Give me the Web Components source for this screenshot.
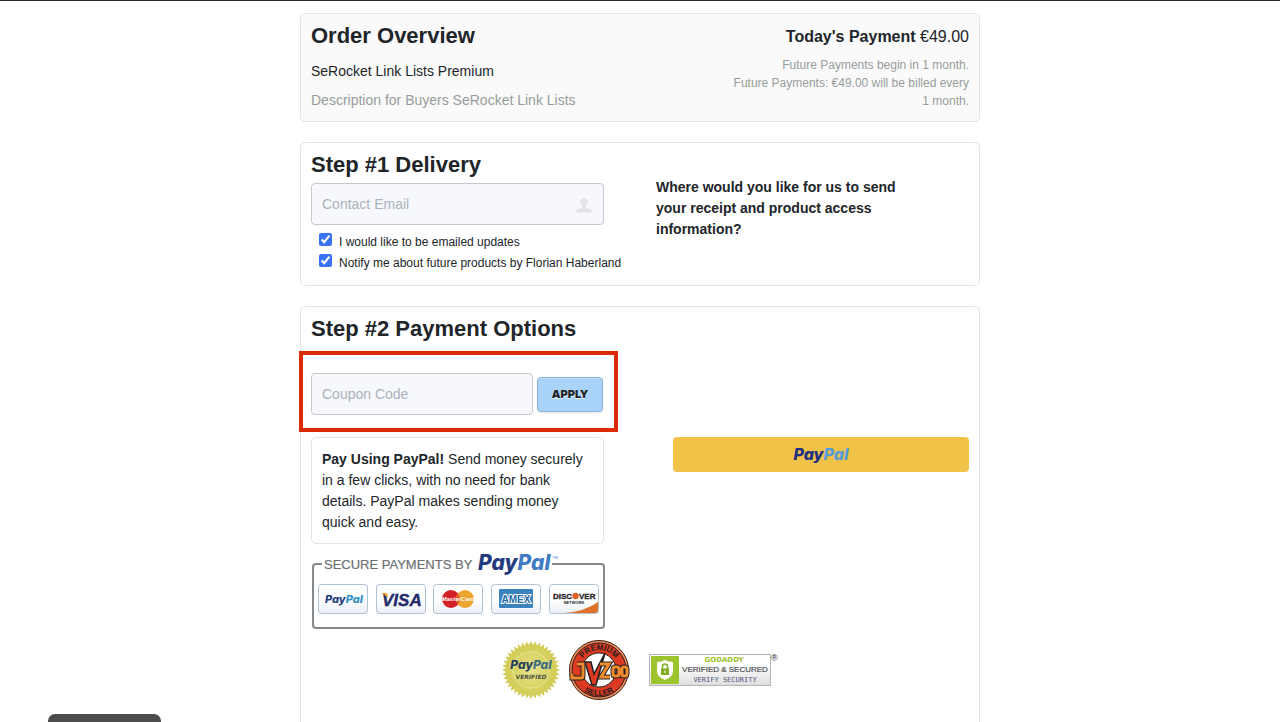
<!DOCTYPE html>
<html lang="en">
<head>
<meta charset="utf-8">
<title>Order Overview</title>
<style>
   html, body {
      height: 100%;
   }
   body {
      margin: 0;
      background: white;
      color: #212529;
      font: 14px/21px "Liberation Sans", Arial, sans-serif;
   }
</style>
</head>
<body>
<checkout-page></checkout-page>

<script>
function makeTemplate(html){
   const template = document.createElement("template")
   template.innerHTML = html
   return template
}

class BaseElement extends HTMLElement {
   constructor(){
      super()
      this.attachShadow({ mode: "open" })
      this.shadowRoot.appendChild(this.constructor.template.content.cloneNode(true))
   }
}

// bordered box, "open" leaves out the bottom edge
class PagePanel extends BaseElement {
   static template = makeTemplate(`
      <style>
         :host {
            display: block;
            box-sizing: border-box;
            padding: 10px;
            border: 1px solid #e3e5e5;
            border-radius: 5px;
            background: white;
         }
         :host([shaded]) {
            background: #fafafa;
         }
         :host([open]) {
            border-bottom: 0;
            border-radius: 5px 5px 0 0;
         }
      </style>
      <slot></slot>
   `)
}
customElements.define("page-panel", PagePanel)

class OrderOverview extends BaseElement {
   static template = makeTemplate(`
      <style>
         :host {
            display: block;
         }
         .row {
            display: flex;
            justify-content: space-between;
         }
         h2 {
            margin: 0 0 13px;
            font-size: 22px;
            line-height: 24px;
         }
         p {
            margin: 0;
         }
         .description {
            margin-top: 8px;
            color: #979d9b;
         }
         .price {
            width: 240px;
            text-align: right;
         }
         .today {
            margin-bottom: 6px;
            font-size: 16px;
            line-height: 26px;
         }
         .future {
            color: #979d9b;
            font-size: 12px;
            line-height: 18px;
         }
      </style>
      <page-panel shaded>
         <div class="row">
            <div>
               <h2>Order Overview</h2>
               <p>SeRocket Link Lists Premium</p>
               <p class="description">Description for Buyers SeRocket Link Lists</p>
            </div>
            <div class="price">
               <p class="today"><b>Today's Payment</b> €49.00</p>
               <p class="future">Future Payments begin in 1 month.</p>
               <p class="future">Future Payments: €49.00 will be billed every 1 month.</p>
            </div>
         </div>
      </page-panel>
   `)
}
customElements.define("order-overview", OrderOverview)

class TextField extends BaseElement {
   static template = makeTemplate(`
      <style>
         :host {
            display: block;
            position: relative;
         }
         input {
            display: block;
            box-sizing: border-box;
            width: 100%;
            height: 42px;
            padding: 0 10px;
            border: 1px solid #c5c9cb;
            border-radius: 4px;
            background: #f6f8fd;
            color: inherit;
            font: inherit;
         }
         input::placeholder {
            color: #acb2b9;
            opacity: 1;
         }
         ::slotted(svg) {
            position: absolute;
            right: 12px;
            top: 14px;
         }
      </style>
      <input>
      <slot></slot>
   `)

   connectedCallback(){
      const input = this.shadowRoot.querySelector("input")
      input.type = this.getAttribute("type") || "text"
      input.placeholder = this.getAttribute("label")
      input.setAttribute("aria-label", this.getAttribute("label"))
   }
}
customElements.define("text-field", TextField)

class CheckOption extends BaseElement {
   static template = makeTemplate(`
      <style>
         :host {
            display: block;
            padding-left: 8px;
            font-size: 12px;
            white-space: nowrap;
         }
         label {
            display: flex;
            align-items: flex-end;
            gap: 7px;
            height: 21px;
         }
         input {
            width: 13px;
            height: 13px;
            margin: 0 0 7px;
            accent-color: #3b73f6;
         }
      </style>
      <label><input type="checkbox" checked><slot></slot></label>
   `)
}
customElements.define("check-option", CheckOption)

class DeliveryStep extends BaseElement {
   static template = makeTemplate(`
      <style>
         :host {
            display: block;
         }
         .columns {
            display: grid;
            grid-template-columns: 293px 1fr;
            gap: 52px;
            padding-bottom: 1px;
         }
         h2 {
            margin: 0 0 6px;
            font-size: 22px;
            line-height: 24px;
         }
         text-field {
            margin-bottom: 7px;
         }
         .question {
            max-width: 260px;
            margin: 24px 0 0;
            font-weight: bold;
         }
      </style>
      <page-panel>
         <div class="columns">
            <div>
               <h2>Step #1 Delivery</h2>
               <text-field type="email" label="Contact Email">
                  <svg width="16" height="16" viewBox="0 0 16 16" fill="#e1e3e4">
                     <path d="M8 1c2.300 0 3.700 1.600 3.700 3.900 0 1.700-.8 3.300-2 4.200v1.300c1 .7 4.200 1 5.400 2 .7.600.9 1.500.9 3.100H0c0-1.600.2-2.500.9-3.100 1.200-1 4.400-1.300 5.400-2V9.100c-1.200-.9-2-2.500-2-4.200C4.300 2.600 5.700 1 8 1z"/>
                  </svg>
               </text-field>
               <check-option>I would like to be emailed updates</check-option>
               <check-option>Notify me about future products by Florian Haberland</check-option>
            </div>
            <p class="question">Where would you like for us to send your receipt and product access information?</p>
         </div>
      </page-panel>
   `)
}
customElements.define("delivery-step", DeliveryStep)

class CouponForm extends BaseElement {
   static template = makeTemplate(`
      <style>
         :host {
            display: block;
            position: relative;
            width: 292px;
         }
         form {
            display: flex;
            align-items: center;
            gap: 4px;
         }
         text-field {
            flex: 1;
         }
         button {
            width: 66px;
            height: 35px;
            padding: 0;
            border: 1px solid #8cb4da;
            border-radius: 4px;
            background: #a9d3f8;
            box-shadow: inset 0 1px 0 #bcdffb, 0 1px 2px rgba(0,0,0,0.1);
            color: #212529;
            font: 900 11px Inter, sans-serif;
            text-shadow: 0 1px 1px rgba(255,255,255,0.8);
         }
         .highlight {
            position: absolute;
            inset: -22px -15px -17px -12px;
            border: 4px solid #dc2a04;
            pointer-events: none;
         }
      </style>
      <form>
         <text-field label="Coupon Code"></text-field>
         <button type="button">APPLY</button>
      </form>
      <div class="highlight"></div>
   `)
}
customElements.define("coupon-form", CouponForm)

class PaypalButton extends BaseElement {
   static template = makeTemplate(`
      <style>
         :host {
            display: block;
         }
         button {
            display: block;
            width: 100%;
            height: 35px;
            padding: 0;
            border: 0;
            border-radius: 4px;
            background: #f0c248;
            color: #213080;
            font: italic 800 16px/35px Inter, sans-serif;
         }
         span {
            color: #569bdc;
         }
      </style>
      <button type="button">Pay<span>Pal</span></button>
   `)
}
customElements.define("paypal-button", PaypalButton)

class SecurePayments extends BaseElement {
   static template = makeTemplate(`
      <style>
         :host {
            display: block;
         }
         svg {
            display: block;
         }
         .brand {
            font-family: Inter, sans-serif;
            font-style: italic;
            font-weight: 800;
         }
      </style>
      <svg width="296" height="86" viewBox="0 -6 296 86" role="img" aria-label="Secure payments by PayPal">
         <defs>
            <linearGradient id="card" x1="0" y1="0" x2="0" y2="1">
               <stop offset="0" stop-color="#ffffff"/>
               <stop offset="0.6" stop-color="#fdfdfe"/>
               <stop offset="1" stop-color="#e9eef4"/>
            </linearGradient>
         </defs>
         <path d="M11 12H5q-3 0-3 3v58q0 3 3 3h285q3 0 3-3V15q0-3-3-3h-49" fill="none" stroke="#87888b" stroke-width="2"/>
         <text x="13" y="17" font-size="13" fill="#6d6f73" stroke="#6d6f73" stroke-width="0.2" font-family="Liberation Sans">SECURE PAYMENTS BY</text>
         <text class="brand" x="167" y="18" font-size="21" fill="#253b80">Pay<tspan fill="#3f7cc4">Pal</tspan></text>
         <text x="241" y="7" font-size="4" fill="#3f7cc4">TM</text>
         <g fill="url(#card)" stroke="#afc1d2">
            <rect x="7.5" y="32.5" width="49" height="29" rx="3"/>
            <rect x="65.5" y="32.5" width="49" height="29" rx="3"/>
            <rect x="122.5" y="32.5" width="49" height="29" rx="3"/>
            <rect x="180.5" y="32.5" width="49" height="29" rx="3"/>
            <rect x="238.5" y="32.5" width="49" height="29" rx="3"/>
         </g>

         <text class="brand" x="14" y="51" font-size="11" fill="#22407c">Pay<tspan fill="#3191c4">Pal</tspan></text>

         <text x="71" y="54" font-size="17" font-weight="bold" font-style="italic" font-family="Liberation Sans" fill="#232c6b" stroke="#232c6b" stroke-width="0.4">VISA</text>
         <path d="M70 41h6l1 5q-2-3-7-5z" fill="#eca52c"/>

         <circle cx="140" cy="47" r="9" fill="#d32027"/>
         <circle cx="154" cy="47" r="9" fill="#eda52f"/>
         <path d="M147 41.300a9 9 0 0 1 0 11.400a9 9 0 0 1 0-11.400z" fill="#e2622c"/>
         <text x="147" y="49" font-size="6" font-weight="bold" font-style="italic" text-anchor="middle" fill="white" font-family="Liberation Sans">MasterCard</text>

         <rect x="188" y="37" width="34" height="19" rx="1" fill="#3b83bd"/>
         <text x="205" y="51" font-size="10" font-weight="bold" text-anchor="middle" font-family="Liberation Sans" fill="#236ba9" stroke="white" stroke-width="2" paint-order="stroke">AMEX</text>

         <path d="M287 50v8q0 3-3 3h-31q20-1 34-11z" fill="#df712c"/>
         <g font-family="Liberation Sans" font-weight="bold" fill="#252525">
            <text x="242" y="47" font-size="8" stroke="#252525" stroke-width="0.3">DISC</text>
            <text x="268" y="47" font-size="8" stroke="#252525" stroke-width="0.3">VER</text>
            <text x="263" y="52" font-size="4" text-anchor="middle">NETWORK</text>
         </g>
         <circle cx="264.5" cy="44" r="3.2" fill="#e26023"/>
      </svg>
   `)
}
customElements.define("secure-payments", SecurePayments)

class TrustBadges extends BaseElement {
   static template = makeTemplate(`
      <style>
         :host {
            display: flex;
            justify-content: center;
            align-items: center;
         }
         a {
            color: inherit;
            text-decoration: none;
         }
         svg {
            display: block;
         }
         .jvzoo {
            margin: 0 19px 0 9px;
         }
      </style>
      <a href="#" aria-label="PayPal Verified">
         <svg width="58" height="60" viewBox="-29 -30 58 60">
            <defs>
               <radialGradient id="seal">
                  <stop offset="0" stop-color="#e9e48f"/>
                  <stop offset="0.55" stop-color="#dcd76c"/>
                  <stop offset="1" stop-color="#d2cc57"/>
               </radialGradient>
            </defs>
            <polygon class="teeth" fill="#d3cc58"/>
            <circle r="25" fill="url(#seal)"/>
            <circle r="18" fill="none" stroke="#e9e593"/>
            <text x="0" y="-1" text-anchor="middle" font-family="Inter" font-size="12" font-weight="800" font-style="italic" fill="#26405f">Pay<tspan fill="#3b6c86">Pal</tspan></text>
            <text x="0" y="9" text-anchor="middle" font-family="DejaVu Sans" font-size="6" font-weight="bold" font-style="italic" fill="#4a5444">VERIFIED</text>
         </svg>
      </a>
      <a class="jvzoo" href="#" aria-label="JVZoo Premium Seller">
         <svg width="61" height="60" viewBox="-30 -30 61 60">
            <defs>
               <path id="top" d="M-20 0A20 20 0 0 1 20 0"/>
               <path id="bottom" d="M-26 0A26 26 0 0 0 26 0"/>
               <path id="letters" d="M-22-6h6V6q0 2-2 2h-9V4M1-6h9L2 7h9M16-3h2q2 0 2 2v5q0 2-2 2h-2q-2 0-2-2v-5q0-2 2-2M25-3h1q2 0 2 2v5q0 2-2 2h-1q-2 0-2-2v-5q0-2 2-2"/>
            </defs>
            <circle r="29.5" fill="#ee8a55" stroke="#3b1c12"/>
            <circle r="27" fill="#dc3a22" stroke="#231f20"/>
            <circle r="17" fill="white" stroke="#231f20"/>
            <g font-family="Liberation Sans" font-size="8" font-weight="bold" fill="#231f20" text-anchor="middle">
               <text><textPath href="#top" startOffset="50%">PREMIUM</textPath></text>
               <text><textPath href="#bottom" startOffset="50%">SELLER</textPath></text>
            </g>
            <path d="M-14-8h6l3 12L6-17-3 15h-4z" fill="#dc3a22" stroke="#231f20" stroke-width="1.5"/>
            <g fill="none">
               <use href="#letters" stroke="#231f20" stroke-width="5"/>
               <use href="#letters" stroke="#f08c2e" stroke-width="3"/>
            </g>
         </svg>
      </a>
      <a href="#" aria-label="GoDaddy Verified and Secured">
         <svg width="129" height="36" viewBox="0 0 129 36">
            <defs>
               <linearGradient id="plate" x1="0" y1="0" x2="0" y2="1">
                  <stop offset="0.3" stop-color="#ffffff"/>
                  <stop offset="1" stop-color="#dedede"/>
               </linearGradient>
            </defs>
            <rect x="0.5" y="2.5" width="121" height="31" fill="url(#plate)" stroke="#b5b5b5"/>
            <rect x="2" y="4" width="28" height="28" fill="#9bc42d"/>
            <path d="M16 8q3 2 8 2v9q0 6-8 9-8-3-8-9v-9q5 0 8-2z" fill="white"/>
            <path d="M13.500 17v-2.500a2.500 2.500 0 0 1 5 0V17" fill="none" stroke="#82ad22" stroke-width="1.5"/>
            <rect x="12" y="16.5" width="8" height="6.5" fill="#82ad22"/>
            <rect x="15.5" y="18.5" width="1" height="2.5" fill="white"/>
            <text x="75" y="10" text-anchor="middle" font-family="DejaVu Sans" font-size="7" font-weight="bold" fill="#9bc42d">GODADDY</text>
            <text x="76" y="20" text-anchor="middle" font-family="Liberation Sans" font-size="8" fill="#4c4e52" stroke="#4c4e52" stroke-width="0.2">VERIFIED &amp; SECURED</text>
            <text x="76" y="30" text-anchor="middle" font-family="DejaVu Sans Mono" font-size="7" fill="#55557c">VERIFY SECURITY</text>
            <text x="122" y="9" font-family="Liberation Sans" font-size="9" fill="#222">®</text>
         </svg>
      </a>
   `)

   constructor(){
      super()
      // toothed edge of the seal
      const points = []
      for(let i = 0; i < 80; i++){
         const r = i % 2 ? 25 : 29
         const angle = i * Math.PI / 40
         points.push(`${(r * Math.cos(angle)).toFixed(1)},${(r * Math.sin(angle)).toFixed(1)}`)
      }
      this.shadowRoot.querySelector(".teeth").setAttribute("points", points.join(" "))
   }
}
customElements.define("trust-badges", TrustBadges)

class PaymentStep extends BaseElement {
   static template = makeTemplate(`
      <style>
         :host {
            display: grid;
         }
         h2 {
            margin: 0 0 32px;
            font-size: 22px;
            line-height: 24px;
         }
         .columns {
            display: grid;
            grid-template-columns: 293px 1fr;
            gap: 69px;
            margin: 22px 0 8px;
         }
         p {
            margin: 0 0 2px;
            padding: 11px 10px 10px;
            border: 1px solid #e3e5e5;
            border-radius: 5px;
         }
      </style>
      <page-panel open>
         <h2>Step #2 Payment Options</h2>
         <coupon-form></coupon-form>
         <div class="columns">
            <div>
               <p><b>Pay Using PayPal!</b> Send money securely in a few clicks, with no need for bank details. PayPal makes sending money quick and easy.</p>
               <secure-payments></secure-payments>
            </div>
            <paypal-button></paypal-button>
         </div>
         <trust-badges></trust-badges>
      </page-panel>
   `)
}
customElements.define("payment-step", PaymentStep)

class CheckoutPage extends BaseElement {
   static template = makeTemplate(`
      <style>
         :host {
            display: flex;
            flex-direction: column;
            box-sizing: border-box;
            min-height: 100%;
            border-top: 1px solid #2b2b2d;
         }
         main {
            display: flex;
            flex: 1;
            flex-direction: column;
            gap: 20px;
            box-sizing: border-box;
            width: 100%;
            max-width: 680px;
            margin: 0 auto;
            padding-top: 12px;
         }
         payment-step {
            flex: 1;
         }
         .status {
            position: fixed;
            left: 48px;
            bottom: 0;
            width: 113px;
            height: 8px;
            border-radius: 7px 7px 0 0;
            background: #4b4c4d;
         }
      </style>
      <main>
         <order-overview></order-overview>
         <delivery-step></delivery-step>
         <payment-step></payment-step>
      </main>
      <div class="status"></div>
   `)
}
customElements.define("checkout-page", CheckoutPage)
</script>
</body>
</html>
